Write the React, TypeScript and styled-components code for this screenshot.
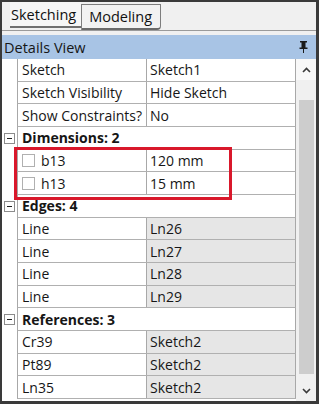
import React from "react";
import styled, { createGlobalStyle, css } from "styled-components";

const GlobalStyle = createGlobalStyle`
  html, body {
    margin: 0;
    padding: 0;
    background: #ffffff;
  }
  body {
    font-family: "Open Sans", "Noto Sans", "DejaVu Sans", sans-serif;
    font-size: 14px;
    color: #161616;
  }
`;

const ROW_H = 22.67;

const Frame = styled.div`
  width: 319px;
  height: 404px;
  box-sizing: border-box;
  border-top: 2px solid #3a3a3a;
  border-left: 2px solid #3a3a3a;
  border-right: 3px solid #3a3a3a;
  border-bottom: 3px solid #3a3a3a;
  background: #f0f0f0;
  display: flex;
  flex-direction: column;
  overflow: hidden;
`;

const TabStrip = styled.div`
  height: 28px;
  display: flex;
  align-items: flex-start;
  border-bottom: 1px solid #9a9a9a;
  background: #f0f0f0;
`;

const Tab = styled.div<{ $active?: boolean }>`
  box-sizing: border-box;
  height: 26px;
  display: flex;
  align-items: center;
  font-size: 14.5px;
  color: #111;
  ${(p) =>
    p.$active
      ? css`
          margin-top: 2px;
          padding: 0 8px 0 7px;
          background: #f2f2f2;
          border: 1px solid #7d7d7d;
          border-bottom: 2px solid #6a6a6a;
          border-radius: 0 0 4px 0;
        `
      : css`
          margin-left: 8px;
          padding: 0 5px 0 1px;
          background: #f6f6f6;
          border-bottom: 2px solid #6f6f6f;
        `}
`;

const Gap = styled.div`
  height: 4px;
  background: #f0f0f0;
`;

const Header = styled.div`
  height: 24px;
  display: flex;
  align-items: center;
  justify-content: space-between;
  padding: 0 8px 0 2px;
  background: #a8c4e5;
  font-size: 14.5px;
  color: #161616;
`;

const Body = styled.div`
  flex: 1;
  display: flex;
  background: #ffffff;
  min-height: 0;
`;

const Grid = styled.div`
  flex: 1;
  display: flex;
  flex-direction: column;
`;

const Row = styled.div`
  height: ${ROW_H}px;
  display: flex;
  flex-shrink: 0;
`;

const Gutter = styled.div`
  width: 15px;
  display: flex;
  align-items: center;
  justify-content: center;
`;

const Toggle = styled.div`
  width: 11px;
  height: 11px;
  box-sizing: border-box;
  border: 1px solid #8c8c8c;
  background: #fff;
  position: relative;
  &::after {
    content: "";
    position: absolute;
    left: 2px;
    right: 2px;
    top: 4px;
    height: 1px;
    background: #222;
  }
`;

const Cells = styled.div`
  flex: 1;
  display: flex;
  box-sizing: border-box;
  border-left: 1px solid #a8a8a8;
  border-right: 1px solid #a8a8a8;
  border-bottom: 1px solid #b0b0b0;
`;

const NameCell = styled.div`
  width: 129px;
  box-sizing: border-box;
  border-right: 1px solid #a8a8a8;
  display: flex;
  align-items: center;
  gap: 6px;
  padding-left: 4px;
  white-space: nowrap;
  overflow: hidden;
`;

const ValueCell = styled.div<{ $readOnly?: boolean }>`
  flex: 1;
  display: flex;
  align-items: center;
  padding-left: 3px;
  white-space: nowrap;
  background: ${(p) => (p.$readOnly ? "#e6e6e6" : "#ffffff")};
`;

const SectionTitle = styled.div`
  flex: 1;
  display: flex;
  align-items: center;
  padding-left: 4px;
  font-weight: 700;
`;

const CheckBox = styled.span`
  width: 13px;
  height: 13px;
  box-sizing: border-box;
  border: 1px solid #b0b0b0;
  background: #fff;
  flex-shrink: 0;
`;

const Highlight = styled.div`
  position: relative;
  &::after {
    content: "";
    position: absolute;
    left: 12px;
    top: -3px;
    width: 218px;
    bottom: -5px;
    border: 3px solid #d9182b;
    box-sizing: border-box;
    pointer-events: none;
  }
`;

const Scrollbar = styled.div`
  width: 20px;
  display: flex;
  flex-direction: column;
  background: #f0f0f0;
`;

const ScrollButton = styled.div<{ $light?: boolean }>`
  height: 21px;
  display: flex;
  align-items: center;
  justify-content: center;
  background: ${(p) => (p.$light ? "#f8f8f8" : "#f0f0f0")};
`;

const Track = styled.div`
  flex: 1;
  display: flex;
  flex-direction: column;
  padding: 20px 2px 6px 3px;
`;

const Thumb = styled.div`
  flex: 1;
  background: #cdcdcd;
`;

const Pin = () => (
  <svg width="9" height="12" viewBox="0 0 9 12">
    <rect x="1" y="0" width="7" height="1.5" fill="#1a1a1a" />
    <rect x="2.5" y="1" width="4" height="6" fill="#1a1a1a" />
    <rect x="0.5" y="6.5" width="8" height="1.5" fill="#1a1a1a" />
    <rect x="4" y="8" width="1" height="4" fill="#1a1a1a" />
  </svg>
);

const Chevron = ({ up }: { up?: boolean }) => (
  <svg width="9" height="6" viewBox="0 0 9 6">
    <path
      d={up ? "M1 5 L4.5 1.5 L8 5" : "M1 1 L4.5 4.5 L8 1"}
      fill="none"
      stroke="#3a3a3a"
      strokeWidth="1.6"
    />
  </svg>
);

type Prop = { name: string; value: string; check?: boolean };

const general: Prop[] = [
  { name: "Sketch", value: "Sketch1" },
  { name: "Sketch Visibility", value: "Hide Sketch" },
  { name: "Show Constraints?", value: "No" },
];

const dimensions: Prop[] = [
  { name: "b13", value: "120 mm", check: true },
  { name: "h13", value: "15 mm", check: true },
];

const edges: Prop[] = [
  { name: "Line", value: "Ln26" },
  { name: "Line", value: "Ln27" },
  { name: "Line", value: "Ln28" },
  { name: "Line", value: "Ln29" },
];

const references: Prop[] = [
  { name: "Cr39", value: "Sketch2" },
  { name: "Pt89", value: "Sketch2" },
  { name: "Ln35", value: "Sketch2" },
];

const PropRow = ({ item, readOnly }: { item: Prop; readOnly?: boolean }) => (
  <Row>
    <Gutter />
    <Cells>
      <NameCell>
        {item.check && <CheckBox />}
        {item.name}
      </NameCell>
      <ValueCell $readOnly={readOnly}>{item.value}</ValueCell>
    </Cells>
  </Row>
);

const SectionRow = ({ title }: { title: string }) => (
  <Row>
    <Gutter>
      <Toggle />
    </Gutter>
    <Cells>
      <SectionTitle>{title}</SectionTitle>
    </Cells>
  </Row>
);

export default function App() {
  return (
    <>
      <GlobalStyle />
      <Frame>
        <TabStrip>
          <Tab>Sketching</Tab>
          <Tab $active>Modeling</Tab>
        </TabStrip>
        <Gap />
        <Header>
          <span>Details View</span>
          <Pin />
        </Header>
        <Body>
          <Grid>
            {general.map((p, i) => (
              <PropRow key={"g" + i} item={p} />
            ))}
            <SectionRow title="Dimensions: 2" />
            <Highlight>
              {dimensions.map((p, i) => (
                <PropRow key={"d" + i} item={p} />
              ))}
            </Highlight>
            <SectionRow title="Edges: 4" />
            {edges.map((p, i) => (
              <PropRow key={"e" + i} item={p} readOnly />
            ))}
            <SectionRow title="References: 3" />
            {references.map((p, i) => (
              <PropRow key={"r" + i} item={p} readOnly />
            ))}
          </Grid>
          <Scrollbar>
            <ScrollButton $light>
              <Chevron up />
            </ScrollButton>
            <Track>
              <Thumb />
            </Track>
            <ScrollButton>
              <Chevron />
            </ScrollButton>
          </Scrollbar>
        </Body>
      </Frame>
    </>
  );
}
